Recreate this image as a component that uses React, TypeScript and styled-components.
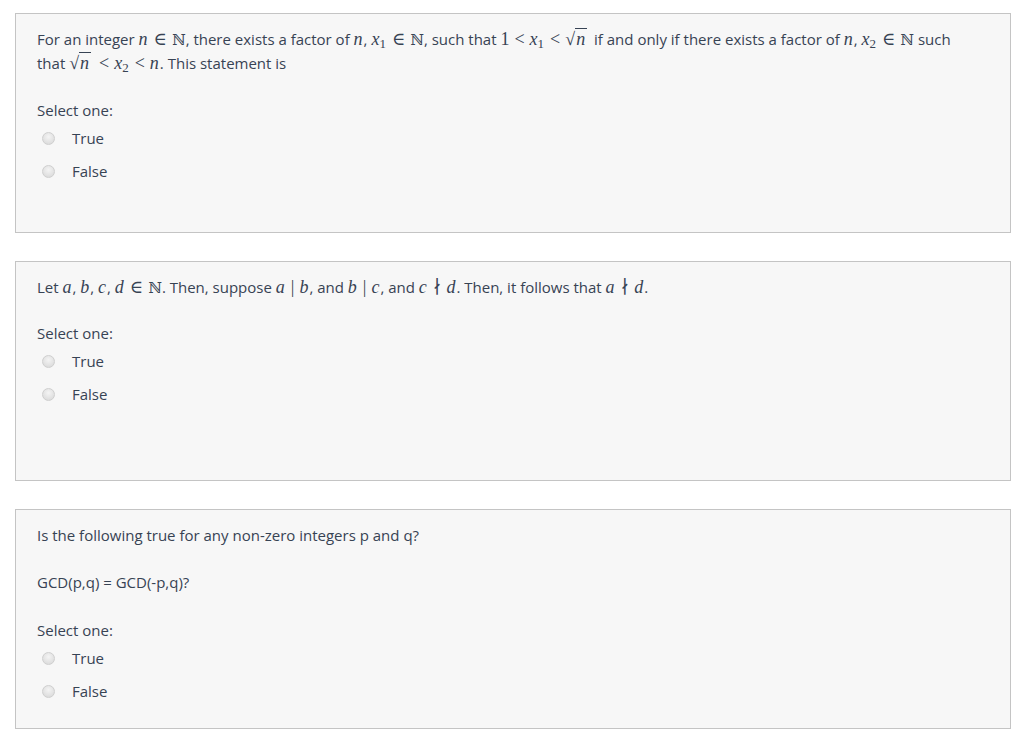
import styled, { createGlobalStyle } from "styled-components";

const Global = createGlobalStyle`
  html, body {
    margin: 0;
    padding: 0;
    background: #fff;
  }
  body {
    font-family: "Open Sans", "Noto Sans", sans-serif;
    font-size: 15px;
    color: #374354;
  }
`;

const Page = styled.div`
  display: flex;
  flex-direction: column;
  gap: 28px;
  padding: 13px 13px 0 15px;
`;

const Card = styled.div`
  box-sizing: border-box;
  height: 220px;
  background: #f7f7f7;
  border: 1px solid #c4c4c4;
  padding: 13px 40px 13px 21px;
`;

const Prompt = styled.p`
  margin: 0;
  line-height: 24px;
`;

const Gap = styled.div<{ $h: number }>`
  height: ${(p) => p.$h}px;
`;

const M = styled.span`
  font-family: "Liberation Serif", "DejaVu Serif", serif;
  font-style: italic;
  font-size: 18px;
  line-height: 1;
  margin-right: 1px;
`;

const Rel = styled.span`
  font-family: "Liberation Serif", "DejaVu Serif", serif;
  font-size: 18px;
  line-height: 1;
  margin: 0 5px;
`;

const Num = styled.span`
  font-family: "Liberation Serif", "DejaVu Serif", serif;
  font-size: 18px;
  line-height: 1;
`;

const DS = styled.span`
  font-family: "DejaVu Serif", serif;
  font-size: 15px;
  line-height: 1;
`;

const Sub = styled.sub`
  font-family: "Liberation Serif", serif;
  font-style: normal;
  font-size: 13px;
  vertical-align: -3px;
  line-height: 0;
`;

const Sqrt = styled.span`
  font-family: "Liberation Serif", serif;
  font-size: 18px;
  line-height: 1;
  white-space: nowrap;
  margin-right: 3px;
`;

const Radicand = styled.span`
  font-style: italic;
  border-top: 1px solid currentColor;
  padding: 0 2px 0 1px;
`;

const SelectLabel = styled.div`
  line-height: 22px;
`;

const Options = styled.div`
  display: flex;
  flex-direction: column;
  gap: 11px;
  margin-top: 6px;
`;

const Option = styled.label`
  display: flex;
  align-items: center;
  line-height: 22px;
  padding-left: 5px;
`;

const Radio = styled.span`
  box-sizing: border-box;
  width: 13px;
  height: 13px;
  border-radius: 50%;
  border: 1px solid #cfcfcf;
  background: radial-gradient(circle at 50% 35%, #f4f4f4 0%, #e2e2e2 60%, #d6d6d6 100%);
  margin-right: 17px;
`;

const SqrtN = () => (
  <Sqrt>
    √<Radicand>n</Radicand>
  </Sqrt>
);

const X = ({ i }: { i: number }) => (
  <M>
    x<Sub>{i}</Sub>
  </M>
);

const Choices = () => (
  <>
    <SelectLabel>Select one:</SelectLabel>
    <Options>
      <Option>
        <Radio />
        True
      </Option>
      <Option>
        <Radio />
        False
      </Option>
    </Options>
  </>
);

export default function App() {
  return (
    <>
      <Global />
      <Page>
        <Card>
          <Prompt>
            For an integer <M>n</M>
            <Rel>∈</Rel>
            <DS>ℕ</DS>, there exists a factor of <M>n</M>, <X i={1} />
            <Rel>∈</Rel>
            <DS>ℕ</DS>, such that <Num>1</Num>
            <Rel>&lt;</Rel>
            <X i={1} />
            <Rel>&lt;</Rel>
            <SqrtN /> if and only if there exists a factor of <M>n</M>, <X i={2} />
            <Rel>∈</Rel>
            <DS>ℕ</DS> such that <SqrtN />
            <Rel>&lt;</Rel>
            <X i={2} />
            <Rel>&lt;</Rel>
            <M>n</M>. This statement is
          </Prompt>
          <Gap $h={24} />
          <Choices />
        </Card>
        <Card>
          <Prompt>
            Let <M>a</M>, <M>b</M>, <M>c</M>, <M>d</M>
            <Rel>∈</Rel>
            <DS>ℕ</DS>. Then, suppose <M>a</M>
            <Rel>|</Rel>
            <M>b</M>, and <M>b</M>
            <Rel>|</Rel>
            <M>c</M>, and <M>c</M>
            <Rel>∤</Rel>
            <M>d</M>. Then, it follows that <M>a</M>
            <Rel>∤</Rel>
            <M>d</M>.
          </Prompt>
          <Gap $h={23} />
          <Choices />
        </Card>
        <Card>
          <Prompt>Is the following true for any non-zero integers p and q?</Prompt>
          <Gap $h={23} />
          <Prompt>GCD(p,q) = GCD(-p,q)?</Prompt>
          <Gap $h={25} />
          <Choices />
        </Card>
      </Page>
    </>
  );
}
